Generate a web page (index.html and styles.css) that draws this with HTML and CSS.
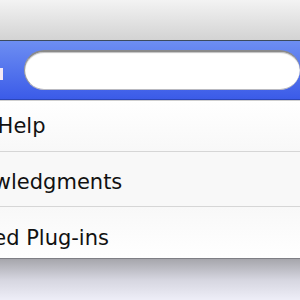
FILE: index.html
```html
<!DOCTYPE html>
<html lang="en">
<head>
  <meta charset="UTF-8">
  <title>Help</title>
  <link rel="stylesheet" href="styles.css">
</head>
<body>
  <div class="window">
    <div class="titlebar"></div>
    <div class="searchbar">
      <span class="mark"></span>
      <div class="field"></div>
    </div>
    <ul class="list">
      <li class="item first"><span class="label">Safari Help</span></li>
      <li class="item second"><span class="label">Acknowledgments</span></li>
      <li class="item third"><span class="label">Installed Plug-ins</span></li>
    </ul>
  </div>
  <div class="desk"></div>
</body>
</html>
```

FILE: styles.css
```css
* {
  padding: 0;
  margin: 0;
  box-sizing: border-box;
}
body {
  width: 300px;
  height: 300px;
  overflow: hidden;
  background: #eeeef8;
  font-family: "DejaVu Sans", "Liberation Sans", sans-serif;
}
.titlebar {
  height: 41px;
  background: linear-gradient(#f3f3f3, #d3d3d3);
  border-bottom: 1px solid #3c4a5c;
}
.searchbar {
  height: 59px;
  display: flex;
  align-items: center;
  background: linear-gradient(#6d8ef2, #3b5be8);
  border-bottom: 1px solid #2c46b8;
}
.mark {
  width: 3px;
  height: 12px;
  margin-top: 8px;
  background: #f4e8f4;
}
.field {
  height: 40px;
  width: 320px;
  margin-left: 21px;
  border-radius: 20px;
  background: #fff;
  border-top: 2px solid #8a8a8a;
  border-bottom: 1px solid #b9b9c0;
  border-left: 1px solid #9a9a9a;
  box-shadow: inset 0 1px 1px rgba(0, 0, 0, .25);
}
.list {
  list-style: none;
  background: #fff;
  border-top: 1px solid #d0d0d0;
  border-bottom: 1px solid #7f7f85;
}
.item {
  display: flex;
  align-items: center;
  font-size: 21px;
  color: #111;
  border-bottom: 1px solid #d6d6d6;
}
.item.first {
  height: 51px;
  padding-top: 0;
  background: linear-gradient(#fff, #f8f8f8);
}
.item.second {
  height: 55px;
  padding-top: 6px;
  background: #f8f8f8;
}
.item.third {
  height: 51px;
  padding-top: 10px;
  border-bottom: none;
  background: linear-gradient(#f8f8f8, #fff);
}
.label {
  margin-left: -70px;
  white-space: nowrap;
}
.desk {
  height: 42px;
  background: linear-gradient(#a6a6ac, #d6d6e0 50%, #efeff9);
}
```
